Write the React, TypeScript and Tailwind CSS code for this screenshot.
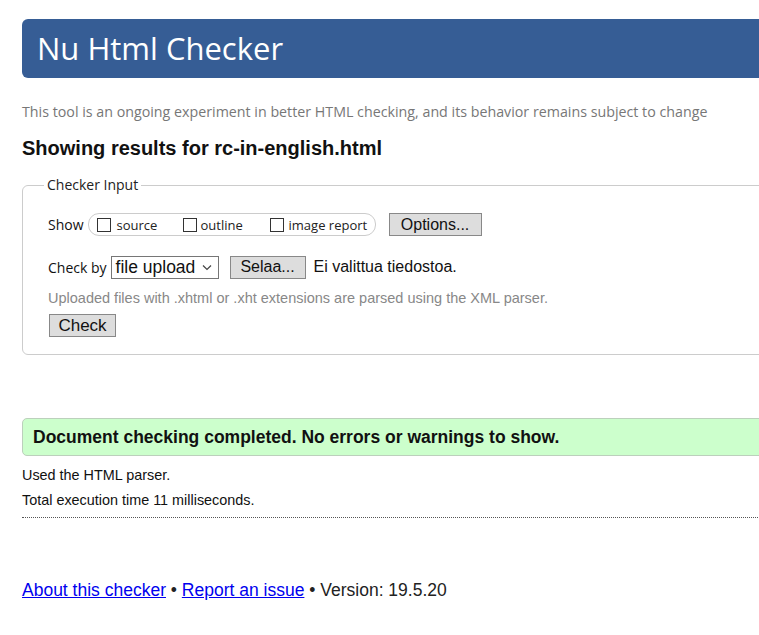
const sans = "font-['Liberation_Sans',Arial,sans-serif]";
const ui = "font-['Open_Sans','Noto_Sans',sans-serif]";

const Box = () => (
  <span className="inline-block h-[14px] w-[14px] border border-[#333] bg-white" />
);

const App = () => {
  return (
    <div className={`h-[635px] w-[759px] overflow-hidden bg-white ${sans} text-[#111]`}>
      <div className="w-[820px] pl-[22px] pt-[19px]">
        <div className="flex h-[59px] items-center rounded-l-[6px] bg-[#365d95] pl-[15px]">
          <h1 className={`${ui} text-[31px] leading-none text-white`}>Nu Html Checker</h1>
        </div>

        <p className={`${ui} mt-[25px] text-[14.25px] leading-[18px] text-[#777]`}>
          This tool is an ongoing experiment in better HTML checking, and its behavior remains subject to change
        </p>

        <h2 className="mt-[16px] text-[20px] font-bold leading-[22px]">Showing results for rc-in-english.html</h2>

        <fieldset className="mt-[18px] rounded-l-[6px] border border-[#ccc] pb-[16px] pl-[25px]">
          <legend className={`${ui} -ml-[4px] px-[3px] text-[14px] leading-[16px] text-[#222]`}>Checker Input</legend>

          <div className="mt-[20px] flex items-center">
            <span className={`${ui} text-[14px]`}>Show</span>
            <div className={`${ui} ml-[4px] flex h-[23px] w-[288px] items-center rounded-[11px] border border-[#ccc] pl-[8px] text-[13px] text-[#222]`}>
              <label className="flex w-[86px] items-center gap-[6px]">
                <Box />
                <span className="mt-[3px]">source</span>
              </label>
              <label className="flex w-[87px] items-center gap-[4px]">
                <Box />
                <span className="mt-[3px]">outline</span>
              </label>
              <label className="flex items-center gap-[5px]">
                <Box />
                <span className="mt-[3px]">image report</span>
              </label>
            </div>
            <button className="ml-[13px] h-[23px] w-[93px] border border-[#888] bg-[#ddd] text-[16px] leading-none">
              Options...
            </button>
          </div>

          <div className="mt-[19px] flex items-center">
            <span className={`${ui} text-[14px]`}>Check by</span>
            <div className="ml-[4px] flex h-[23px] w-[108px] items-center justify-between border border-[#767676] bg-white pl-[4px] pr-[6px] text-[17.5px]">
              <span>file upload</span>
              <svg width="10" height="7" viewBox="0 0 10 7" fill="none" stroke="#444" strokeWidth="1.2">
                <path d="M1 1.5 L5 5.5 L9 1.5" />
              </svg>
            </div>
            <button className="ml-[11px] h-[23px] w-[76px] border border-[#888] bg-[#ddd] text-[16px] leading-none">
              Selaa...
            </button>
            <span className="ml-[8px] text-[16px]">Ei valittua tiedostoa.</span>
          </div>

          <p className="mt-[10px] text-[14.5px] leading-[18px] text-[#888]">
            Uploaded files with .xhtml or .xht extensions are parsed using the XML parser.
          </p>

          <button className="ml-[1px] mt-[7px] h-[23px] w-[67px] border border-[#888] bg-[#ddd] text-[17px] leading-none">
            Check
          </button>
        </fieldset>

        <div className="mt-[63px] flex h-[38px] items-center rounded-l-[5px] border border-[#bcd0bc] bg-[#ccffcc] pl-[10px]">
          <p className="text-[17.5px] font-bold">Document checking completed. No errors or warnings to show.</p>
        </div>

        <p className="mt-[10px] text-[14.4px] leading-[18px]">Used the HTML parser.</p>
        <p className="mt-[7px] text-[14.4px] leading-[18px]">Total execution time 11 milliseconds.</p>
        <div className="mt-[8px] border-b border-dotted border-[#555]" />

        <p className="mt-[61px] text-[17.5px] leading-[22px] text-[#222]">
          <a href="#" className="text-[#0000ee] underline">About this checker</a>
          {" • "}
          <a href="#" className="text-[#0000ee] underline">Report an issue</a>
          {" • Version: 19.5.20"}
        </p>
      </div>
    </div>
  );
};

export default App;
